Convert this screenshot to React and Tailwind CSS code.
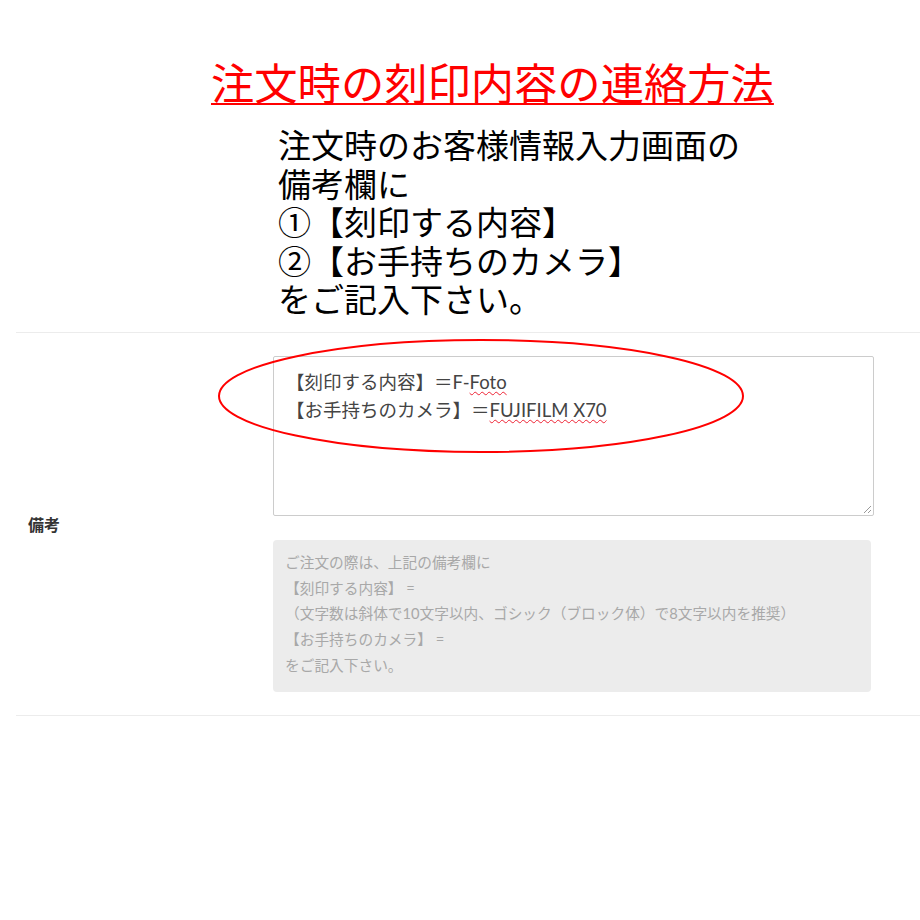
export default function App() {
  return (
    <div className="relative w-[920px] h-[920px] bg-white overflow-hidden font-['Noto_Sans_CJK_JP',sans-serif]">
      <h1 className="pt-[55px] pl-[211px] text-[43.3px] leading-[52px] font-normal text-[#ff0000] underline decoration-[2px] underline-offset-[3px] whitespace-nowrap">
        注文時の刻印内容の連絡方法
      </h1>
      <div className="mt-[18px] pl-[278px] text-[33px] leading-[38.6px] text-black whitespace-nowrap">
        <div>注文時のお客様情報入力画面の</div>
        <div>備考欄に</div>
        <div>①【刻印する内容】</div>
        <div>②【お手持ちのカメラ】</div>
        <div>をご記入下さい。</div>
      </div>

      <div className="ml-[16px] mt-[14px] flex border-t border-b border-[#ececec]">
        <div className="w-[257px] flex items-center pl-[12px]">
          <span className="text-[16px] font-bold text-[#333]">備考</span>
        </div>
        <div className="w-[601px] pt-[23px] pb-[23px]">
          <div className="relative h-[160px] border border-[#cccccc] rounded-[2px] px-[12px] pt-[11px] text-[18.5px] leading-[28px] text-[#444] font-['Lato','Noto_Sans_CJK_JP',sans-serif] whitespace-nowrap">
            <div>
              【刻印する内容】＝F-<span className="underline decoration-wavy decoration-[#e23] decoration-1 underline-offset-[2px]">Foto</span>
            </div>
            <div>
              【お手持ちのカメラ】＝<span className="underline decoration-wavy decoration-[#e23] decoration-1 underline-offset-[2px]">FUJIFILM X70</span>
            </div>
            <svg className="absolute right-[1px] bottom-[1px]" width="9" height="9" viewBox="0 0 9 9">
              <line x1="8" y1="1" x2="1" y2="8" stroke="#999" strokeWidth="1" />
              <line x1="8" y1="5" x2="5" y2="8" stroke="#999" strokeWidth="1" />
            </svg>
          </div>
          <div className="mt-[24px] w-[598px] h-[152px] bg-[#ececec] rounded-[4px] px-[12px] pt-[10px] text-[14.7px] leading-[25.7px] text-[#a8a8a8] font-['Lato','Noto_Sans_CJK_JP',sans-serif] whitespace-nowrap">
            <div>ご注文の際は、上記の備考欄に</div>
            <div>【刻印する内容】 =</div>
            <div>（文字数は斜体で10文字以内、ゴシック（ブロック体）で8文字以内を推奨）</div>
            <div>【お手持ちのカメラ】 =</div>
            <div>をご記入下さい。</div>
          </div>
        </div>
      </div>

      <svg className="absolute left-[214px] top-[337px] pointer-events-none" width="534" height="120" viewBox="0 0 534 120">
        <ellipse cx="267" cy="59" rx="262" ry="56" fill="none" stroke="#ff0000" strokeWidth="2" />
      </svg>
    </div>
  );
}
